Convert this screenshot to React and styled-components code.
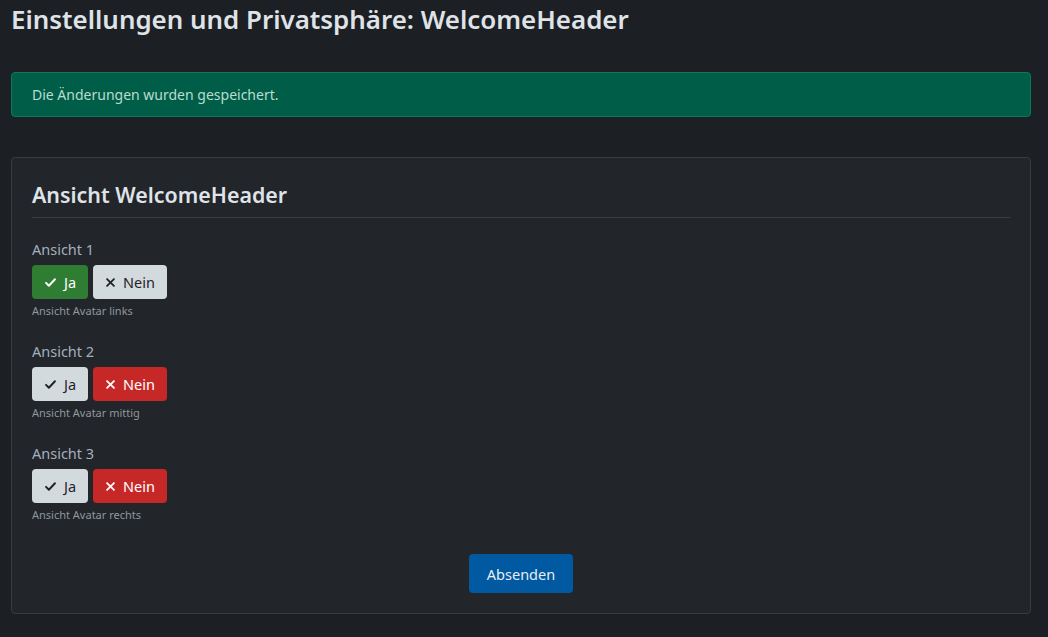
import React, { useState } from 'react'
import styled, { createGlobalStyle } from 'styled-components'

const GlobalStyle = createGlobalStyle`
  html, body {
    margin: 0;
    padding: 0;
    background: #1c1f24;
    font-family: "Noto Sans", "Open Sans", sans-serif;
    color: #dee2e6;
  }
`

const Page = styled.div`
  padding: 0 17px 0 11px;
  min-height: 637px;
  box-sizing: border-box;
`

const Title = styled.h1`
  margin: 0;
  padding-top: 2px;
  font-size: 25.9px;
  font-weight: 600;
  line-height: 34px;
  color: #dfe3e7;
`

const Alert = styled.div`
  margin-top: 36px;
  height: 45px;
  box-sizing: border-box;
  padding: 0 20px;
  display: flex;
  align-items: center;
  background: #005e48;
  border: 1px solid #0c7a57;
  border-radius: 4px;
  font-size: 14px;
  color: #b9dccf;
`

const Card = styled.div`
  margin-top: 40px;
  background: #222529;
  border: 1px solid #383b40;
  border-radius: 4px;
  padding: 20px 20px 20px;
`

const CardTitle = styled.h2`
  margin: 0;
  padding: 2px 0 7px;
  font-size: 21.4px;
  font-weight: 600;
  line-height: 30px;
  color: #dfe3e7;
  border-bottom: 1px solid #3a3d42;
`

const Group = styled.div`
  margin-top: ${p => (p.$first ? '19px' : '20px')};
`

const Label = styled.div`
  font-size: 14.5px;
  line-height: 24px;
  color: #a2b0be;
`

const ButtonRow = styled.div`
  display: flex;
  gap: 5px;
  margin-top: 4px;
`

const variants = {
  success: { bg: '#2e7d32', fg: '#ffffff' },
  danger: { bg: '#c62828', fg: '#ffffff' },
  light: { bg: '#d3dade', fg: '#1f2328' },
}

const Toggle = styled.button`
  display: inline-flex;
  align-items: center;
  gap: 7px;
  height: 34px;
  padding: 0 12px;
  border: none;
  border-radius: 4px;
  font-family: inherit;
  font-size: 14.5px;
  cursor: pointer;
  background: ${p => variants[p.$variant].bg};
  color: ${p => variants[p.$variant].fg};
`

const Help = styled.div`
  margin-top: 4px;
  font-size: 11px;
  line-height: 16px;
  color: #8f979f;
`

const Footer = styled.div`
  display: flex;
  justify-content: center;
  margin-top: 31px;
`

const Submit = styled.button`
  height: 39px;
  padding: 0 18px;
  border: none;
  border-radius: 4px;
  background: #0059a1;
  color: #e8eef5;
  font-family: inherit;
  font-size: 14.5px;
  cursor: pointer;
`

const Check = () => (
  <svg width="13" height="13" viewBox="0 0 16 16" fill="none" stroke="currentColor" strokeWidth="2.4" strokeLinecap="round" strokeLinejoin="round">
    <path d="M2.5 8.5l3.5 3.5 7.5-8" />
  </svg>
)

const Cross = () => (
  <svg width="11" height="11" viewBox="0 0 16 16" fill="none" stroke="currentColor" strokeWidth="2.6" strokeLinecap="round">
    <path d="M3 3l10 10M13 3L3 13" />
  </svg>
)

const views = [
  { label: 'Ansicht 1', help: 'Ansicht Avatar links', on: true },
  { label: 'Ansicht 2', help: 'Ansicht Avatar mittig', on: false },
  { label: 'Ansicht 3', help: 'Ansicht Avatar rechts', on: false },
]

export default function App() {
  const [state, setState] = useState(views.map(v => v.on))

  const set = (i, val) => setState(s => s.map((x, j) => (j === i ? val : x)))

  return (
    <>
      <GlobalStyle />
      <Page>
        <Title>Einstellungen und Privatsphäre: WelcomeHeader</Title>
        <Alert>Die Änderungen wurden gespeichert.</Alert>
        <Card>
          <CardTitle>Ansicht WelcomeHeader</CardTitle>
          {views.map((v, i) => (
            <Group key={v.label} $first={i === 0}>
              <Label>{v.label}</Label>
              <ButtonRow>
                <Toggle $variant={state[i] ? 'success' : 'light'} onClick={() => set(i, true)}>
                  <Check /> Ja
                </Toggle>
                <Toggle $variant={state[i] ? 'light' : 'danger'} onClick={() => set(i, false)}>
                  <Cross /> Nein
                </Toggle>
              </ButtonRow>
              <Help>{v.help}</Help>
            </Group>
          ))}
          <Footer>
            <Submit>Absenden</Submit>
          </Footer>
        </Card>
      </Page>
    </>
  )
}
